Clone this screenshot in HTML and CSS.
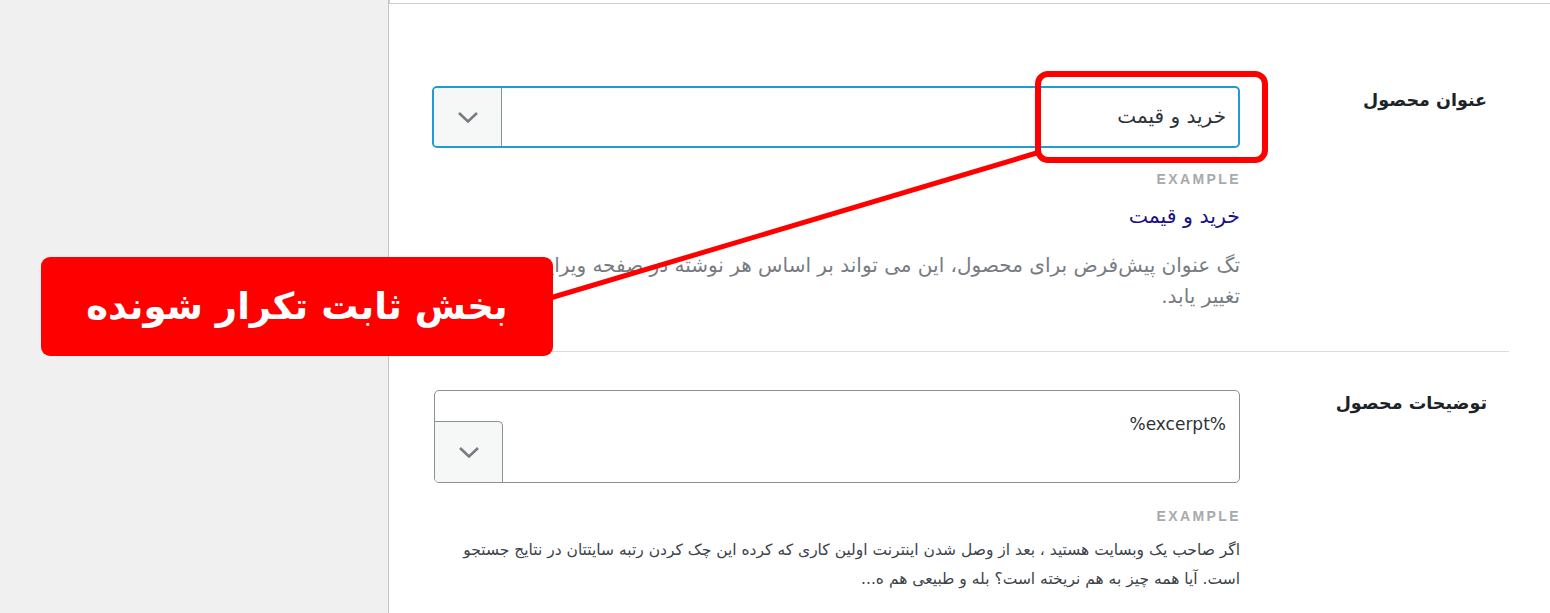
FILE: index.html
```html
<!DOCTYPE html>
<html lang="fa">
<head>
<meta charset="utf-8">
<title>تنظیمات محصول</title>
<link rel="stylesheet" href="styles.css">
</head>
<body>
<div class="page">
  <aside class="sidebar"></aside>
  <main class="main">
    <div class="topbar"></div>
    <div class="form">
      <section class="row row-first">
        <div class="label">عنوان محصول</div>
        <div class="field">
          <div class="input focused">
            <div class="input-text">خرید و قیمت</div>
            <div class="drop">
              <svg width="22" height="13" viewBox="0 0 22 13"><path d="M2 2 L11 10.5 L20 2" fill="none" stroke="#787c82" stroke-width="2.6"/></svg>
            </div>
          </div>
          <div class="example-title">EXAMPLE</div>
          <div class="example-value">خرید و قیمت</div>
          <p class="desc">تگ عنوان پیش‌فرض برای محصول، این می تواند بر اساس هر نوشته در صفحه ویرایش محصول<br>تغییر یابد.</p>
        </div>
      </section>
      <section class="row row-second">
        <div class="label">توضیحات محصول</div>
        <div class="field">
          <div class="textarea">
            <div class="ta-text">%excerpt%</div>
            <div class="drop drop-ta">
              <svg width="22" height="13" viewBox="0 0 22 13"><path d="M2 2 L11 10.5 L20 2" fill="none" stroke="#787c82" stroke-width="2.6"/></svg>
            </div>
          </div>
          <div class="example-title ex2">EXAMPLE</div>
          <p class="desc2">اگر صاحب یک وبسایت هستید ، بعد از وصل شدن اینترنت اولین کاری که کرده این چک کردن رتبه سایتتان در نتایج جستجو<br>است. آیا همه چیز به هم نریخته است؟ بله و طبیعی هم ه...</p>
        </div>
      </section>
    </div>
  </main>
</div>
<svg class="annot" width="1550" height="613" viewBox="0 0 1550 613">
  <rect x="1038" y="74" width="227" height="86" rx="10" fill="none" stroke="#ff0000" stroke-width="6"/>
  <line x1="540" y1="301" x2="1040" y2="152" stroke="#ff0000" stroke-width="5"/>
</svg>
<div class="callout">بخش ثابت تکرار شونده</div>
</body>
</html>
```
FILE: styles.css
```css
html, body {
  margin: 0;
  padding: 0;
}
body {
  width: 1550px;
  height: 613px;
  overflow: hidden;
  position: relative;
  font-family: "DejaVu Sans", "Noto Sans", sans-serif;
  background: #fff;
}
.page {
  display: flex;
  height: 613px;
}
.sidebar {
  width: 388px;
  flex: none;
  background: #f0f0f1;
}
.main {
  flex: 1;
  border-left: 1px solid #c3c4c7;
  background: #fff;
}
.topbar {
  height: 3px;
  border-bottom: 1px solid #c9ccd1;
  border-left: 1px solid #c9ccd1;
}
.form {
  direction: rtl;
  padding-right: 41px;
  padding-left: 20px;
}
.row {
  display: grid;
  grid-template-columns: 269px 808px;
  border-bottom: 1px solid #dcdcde;
}
.row-first {
  padding-top: 82px;
  padding-bottom: 39px;
}
.row-second {
  padding-top: 38px;
  border-bottom: none;
}
.label {
  padding-right: 22px;
  font-size: 17.5px;
  font-weight: bold;
  color: #1d2327;
  line-height: 24px;
  padding-top: 2px;
}
.row-second .label {
  padding-top: 1px;
}
.field {
  display: flex;
  flex-direction: column;
  align-items: stretch;
}
.input {
  height: 62px;
  box-sizing: border-box;
  border: 2px solid #1f9bd7;
  border-radius: 5px;
  display: flex;
  overflow: hidden;
}
.input-text {
  flex: 1;
  padding-right: 12px;
  font-size: 20px;
  color: #2c3338;
  line-height: 56px;
  padding-top: 0;
}
.drop {
  width: 67px;
  flex: none;
  background: #f6f7f7;
  border-right: 1px solid #8c8f94;
  display: flex;
  align-items: center;
  justify-content: center;
}
.drop svg {
  display: block;
}
.example-title {
  margin-top: 24px;
  font-family: "Liberation Sans", Arial, sans-serif;
  font-weight: bold;
  font-size: 14px;
  letter-spacing: 2.4px;
  color: #a7aaad;
  line-height: 14px;
  direction: ltr;
  text-align: right;
  margin-right: -1px;
}
.example-value {
  margin-top: 18px;
  font-size: 20.5px;
  line-height: 24px;
  color: #1a0f8a;
}
.desc {
  margin: 22px 0 0;
  font-size: 20px;
  line-height: 31px;
  color: #787c82;
  white-space: nowrap;
}
.textarea {
  height: 93px;
  box-sizing: border-box;
  border: 1px solid #8c8f94;
  border-radius: 5px;
  display: flex;
  overflow: hidden;
  margin-left: 2px;
}
.ta-text {
  flex: 1;
  align-self: flex-start;
  padding-right: 13px;
  padding-top: 21px;
  font-size: 17px;
  line-height: 24px;
  color: #2c3338;
}
.drop-ta {
  align-self: flex-end;
  height: 60px;
  border-top: 1px solid #8c8f94;
  border-right: 1px solid #8c8f94;
  border-top-right-radius: 5px;
}
.ex2 {
  margin-top: 26px;
}
.desc2 {
  margin: 13px 0 0;
  font-size: 15.5px;
  line-height: 29px;
  color: #3c434a;
  white-space: nowrap;
}
.annot {
  position: absolute;
  left: 0;
  top: 0;
  pointer-events: none;
}
.callout {
  position: absolute;
  left: 41px;
  top: 257px;
  width: 512px;
  height: 99px;
  background: #ff0000;
  border-radius: 9px;
  color: #fff;
  font-weight: bold;
  font-size: 37px;
  direction: rtl;
  display: flex;
  align-items: center;
  justify-content: center;
  font-family: "DejaVu Sans", sans-serif;
}
```
